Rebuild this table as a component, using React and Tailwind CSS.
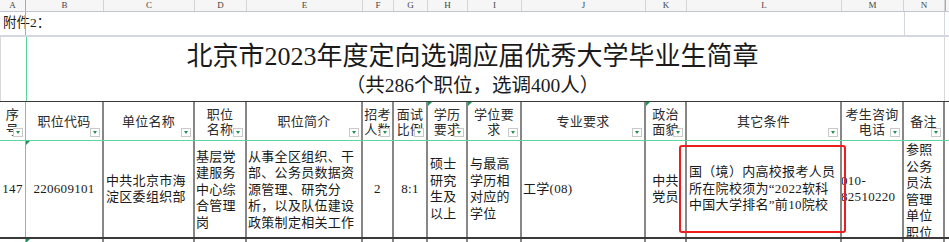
import React from 'react';

const FONT = { fontFamily: '"Liberation Serif", "Noto Sans CJK SC", serif' };

const letters = ['A', 'B', 'C', 'D', 'E', 'F', 'G', 'H', 'I', 'J', 'K', 'L', 'M', 'N', ''];

const GRID =
  'grid grid-cols-[26px_78px_91px_52px_116px_31px_34px_40px_54px_124px_41px_155px_62px_41px_4px]';

const headers = [
  ['序', '号'],
  ['职位代码'],
  ['单位名称'],
  ['职位', '名称'],
  ['职位简介'],
  ['招考', '人数'],
  ['面试', '比例'],
  ['学历', '要求'],
  ['学位要', '求'],
  ['专业要求'],
  ['政治', '面貌'],
  ['其它条件'],
  ['考生咨询', '电话'],
  ['备注'],
];

const FilterBtn = () => (
  <div className="absolute right-[2px] bottom-[3px] z-10 flex h-[9px] w-[10px] items-center justify-center border border-[#c9c9c9] bg-white">
    <div className="h-0 w-0 border-x-[2.5px] border-t-[3px] border-x-transparent border-t-[#1f8f55]" />
  </div>
);

const Tri = () => (
  <div className="absolute left-0 top-0 z-10 h-0 w-0 border-r-[4px] border-t-[4px] border-r-transparent border-t-[#1f8f55]" />
);

function Lines({ lines }) {
  return lines.map((l, i) => (
    <div key={i} className="whitespace-nowrap">
      {l}
    </div>
  ));
}

export default function App() {
  const cellBorder = 'border-r-2 border-[#878787]';
  const firstBorder = 'border-r border-[#5fd49a]';

  // items-* = horizontal, justify-* = vertical (flex-col)
  const data = [
    { lines: ['147'], cls: 'items-center justify-center' },
    { lines: ['220609101'], cls: 'items-center justify-center', tri: true },
    { lines: ['中共北京市海', '淀区委组织部'], cls: 'items-start justify-center pl-[2px]' },
    { lines: ['基层党', '建服务', '中心综', '合管理', '岗'], cls: 'items-start justify-center pl-[1px] pt-[2px]' },
    {
      lines: ['从事全区组织、干', '部、公务员数据资', '源管理、研究分', '析，以及队伍建设', '政策制定相关工作'],
      cls: 'items-start justify-center pl-[1px] pt-[2px]',
    },
    { lines: ['2'], cls: 'items-center justify-center' },
    { lines: ['8:1'], cls: 'items-center justify-center' },
    { lines: ['硕士', '研究', '生及', '以上'], cls: 'items-start justify-center pl-[2px]' },
    { lines: ['与最高', '学历相', '对应的', '学位'], cls: 'items-start justify-center pl-[2px]' },
    { lines: ['工学(08)'], cls: 'items-start justify-center pl-[1px]' },
    { lines: ['中共', '党员'], cls: 'items-center justify-center' },
    {
      lines: ['国（境）内高校报考人员', '所在院校须为“2022软科', '中国大学排名”前10院校'],
      cls: 'items-start justify-center pl-[2px]',
    },
    { lines: ['010-', '82510220'], cls: 'items-start justify-center pl-0 [&>div]:-ml-[1px]' },
    { lines: ['参照', '公务', '员法', '管理', '单位', '职位'], cls: 'items-start justify-start pt-[1px] pl-[2px]' },
  ];

  return (
    <div className="h-[242px] w-[949px] overflow-hidden bg-white text-[#1a1a1a]" style={FONT}>
      {/* column letters */}
      <div className={`${GRID} h-[12px] border-b border-[#bfc6d3] bg-[#f6f6f6]`}>
        {letters.map((l, i) => (
          <div
            key={i}
            className={`flex items-center justify-center text-[9px] leading-none text-[#444] ${
              i === 0 ? 'border-r border-[#5fd49a]' : i === 14 ? 'border-l border-[#5fd49a]' : 'border-r border-[#d4d4d4]'
            }`}
          >
            {l}
          </div>
        ))}
      </div>

      {/* row 1 */}
      <div className={`${GRID} h-[25px] border-b-2 border-[#d3d7e2]`}>
        <div className="relative col-span-13 flex items-center pl-[3px] text-[13.5px]">
          <div className="absolute left-[25px] top-0 h-full w-px bg-[#5fd49a]" />
          附件2：
        </div>
        <div className="border-l border-[#d3d7e2] border-r border-r-[#d3d7e2]" />
        <div />
      </div>

      {/* title row */}
      <div className={`${GRID} h-[64px]`}>
        <div className="relative col-span-14 flex flex-col items-center border-x border-x-[#d9d9d9] pt-[3px]">
          <div className="absolute left-[25px] top-0 h-full w-px bg-[#5fd49a]" />
          <div className="text-[26px] leading-[33px]">北京市2023年度定向选调应届优秀大学毕业生简章</div>
          <div className="text-[19.5px] leading-[25px]">（共286个职位，选调400人）</div>
        </div>
        <div />
      </div>

      {/* header row */}
      <div className={`${GRID} h-[40px] border-y border-t-[#3a3a3a] border-b-[#5fd49a]`}>
        {headers.map((h, i) => (
          <div
            key={i}
            className={`relative flex flex-col items-center justify-center pt-[1px] text-[13px] leading-[15px] tracking-[0.3px] text-[#2b2b2b] ${
              i === 0 ? firstBorder : cellBorder
            }`}
          >
            {(i === 7 || i === 8 || i === 10) && <Tri />}
            <Lines lines={h} />
            <FilterBtn />
          </div>
        ))}
        <div />
      </div>

      {/* data row */}
      <div className={`relative ${GRID} h-[98px] border-b-2 border-[#3a3a3a]`}>
        {data.map((d, i) => (
          <div
            key={i}
            className={`relative flex flex-col overflow-hidden text-[13px] leading-[16.5px] tracking-[0.3px] ${
              d.cls
            } ${i === 0 ? firstBorder : cellBorder}`}
          >
            {d.tri && <Tri />}
            <Lines lines={d.lines} />
          </div>
        ))}
        <div />
        <div className="absolute left-[679px] top-[4px] h-[88px] w-[167px] rounded-[3px] border-2 border-[#ee1c1c]" />
      </div>

      {/* next row sliver */}
      <div className={`${GRID} h-[3px]`}>
        {headers.map((_, i) => (
          <div key={i} className={`relative ${i === 0 ? firstBorder : cellBorder}`}>
            {i === 1 && <Tri />}
          </div>
        ))}
        <div />
      </div>
    </div>
  );
}
